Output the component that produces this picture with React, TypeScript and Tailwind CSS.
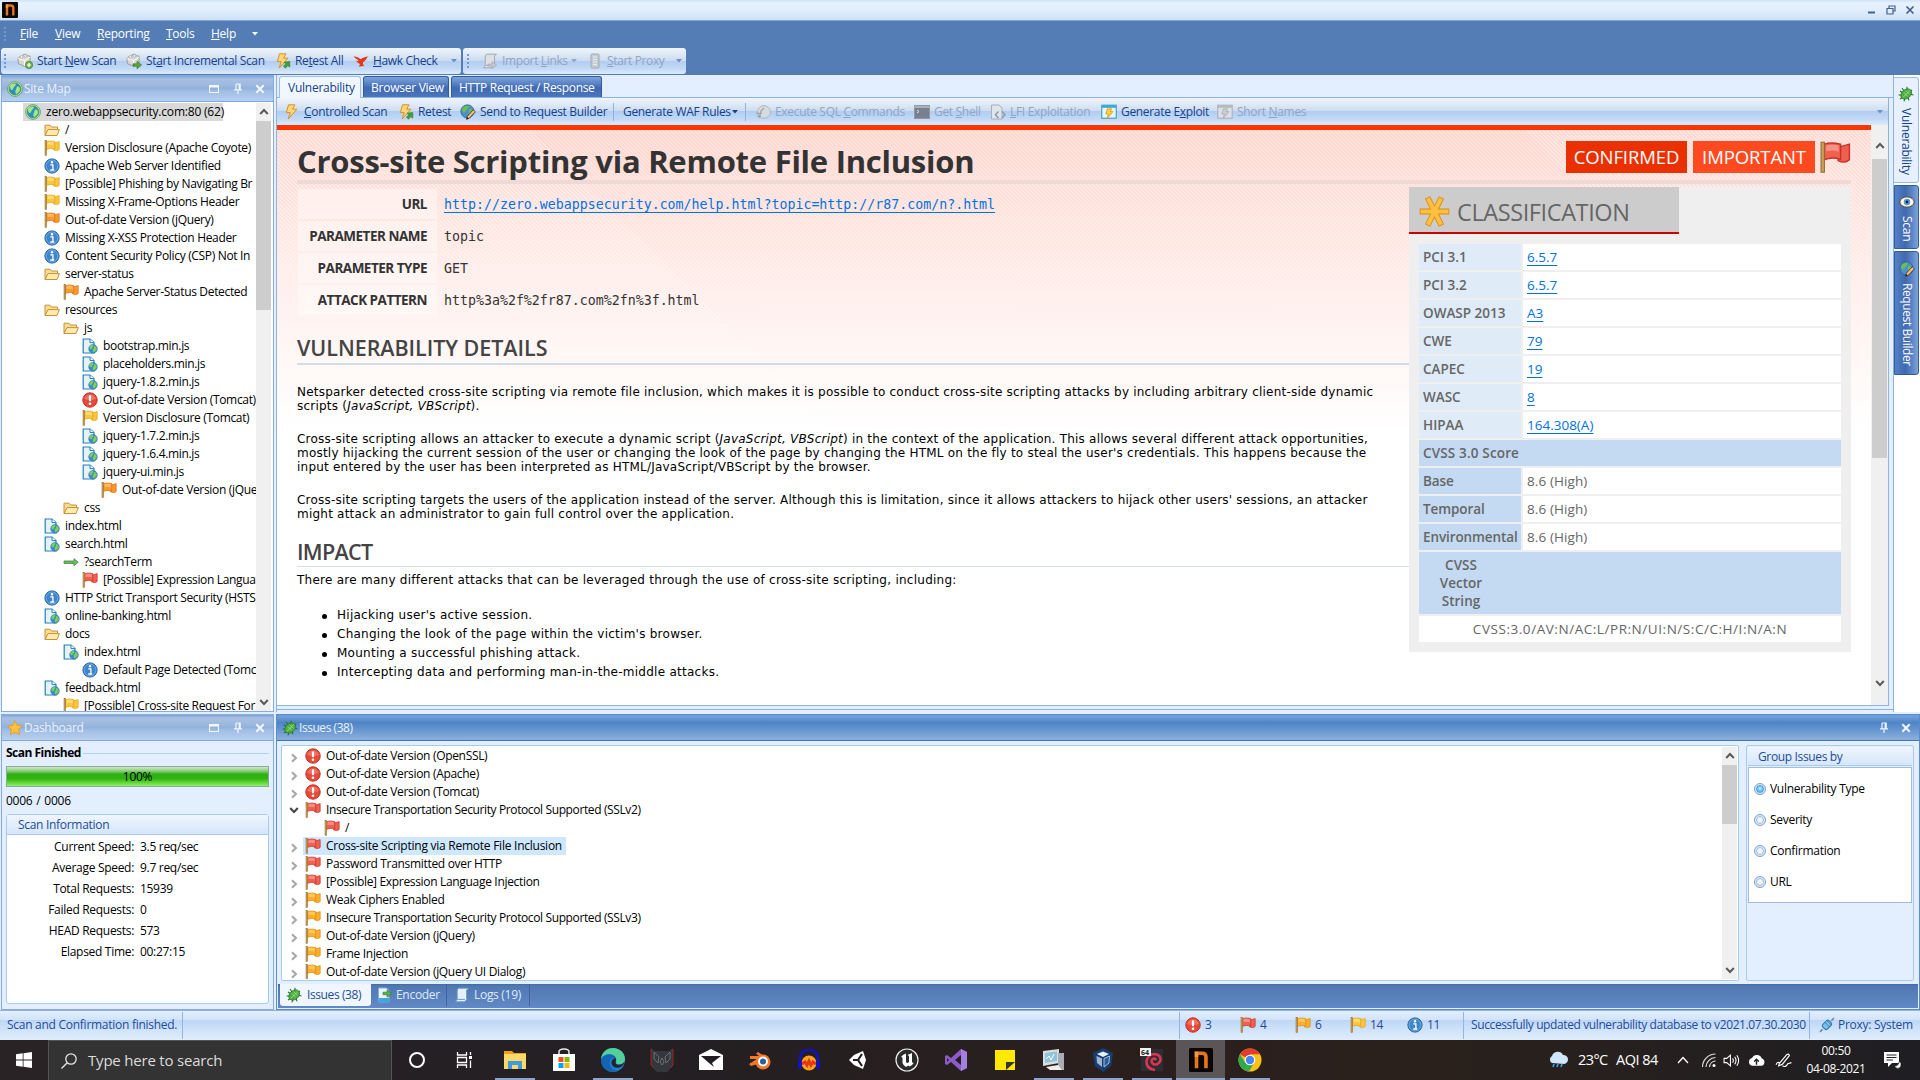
import React from "react";

type P = { className?: string };
type Kids = { children?: React.ReactNode; className?: string };

const UI = "font-['Open_Sans','Noto_Sans',sans-serif]";
const TREB = "font-['Open_Sans','Noto_Sans',sans-serif]";

/* ---------- small icons ---------- */

function Svg({ s = 16, box = "0 0 16 16", children, className = "" }: { s?: number; box?: string } & Kids) {
  return (
    <svg width={s} height={s} viewBox={box} className={"block shrink-0 " + className} fill="none">
      {children}
    </svg>
  );
}

const FLAG: Record<string, [string, string, string]> = {
  red: ["#f0604f", "#c9302c", "#f9a295"],
  orange: ["#fb9a2c", "#e06a10", "#ffc173"],
  amber: ["#fdae2c", "#e08a10", "#ffd36a"],
  yellow: ["#fcc63a", "#e3a11c", "#ffe487"],
};

function Flag({ c, s = 16 }: { c: string; s?: number }) {
  const [m, d, l] = FLAG[c];
  return (
    <Svg s={s}>
      <path d="M9.5 3.2 L15.2 1.6 V9.4 C13.5 11 11.5 10.8 9.5 9.8Z" fill={m} stroke={d} strokeWidth=".7" />
      <path d="M2.5 1.6 C5 .8 8 .9 10.8 1.6 V9.2 C8 8.2 5.5 8.2 2.5 9.4Z" fill={m} stroke={d} strokeWidth=".7" />
      <path d="M3.6 2.2 C6 1.6 8 1.8 9.8 2.3 V5.4 C8 4.6 6 4.6 3.6 5.1Z" fill={l} opacity=".75" />
      <rect x="1" y=".6" width="1.7" height="15" fill="#c9a056" stroke="#8c6a30" strokeWidth=".5" />
    </Svg>
  );
}

function Alert() {
  return (
    <Svg>
      <circle cx="8" cy="8" r="7.2" fill="#e64a3a" stroke="#c03024" />
      <path d="M2.2 7 A6 6 0 0 1 13.8 7 Q8 9 2.2 7Z" fill="#f38a7c" opacity=".6" />
      <rect x="6.9" y="3.2" width="2.2" height="6" rx=".8" fill="#fff" />
      <circle cx="8" cy="11.8" r="1.3" fill="#fff" />
    </Svg>
  );
}

function Info() {
  return (
    <Svg>
      <circle cx="8" cy="8" r="7.1" fill="#3d86cb" stroke="#1f5c9e" />
      <circle cx="8" cy="8" r="6" stroke="#8cbce8" strokeWidth=".7" />
      <circle cx="8" cy="4.3" r="1.2" fill="#fff" />
      <path d="M6.3 6.8H8.9V11.6M6.2 12H10.2" stroke="#fff" strokeWidth="1.3" />
    </Svg>
  );
}

function Folder() {
  return (
    <Svg>
      <path d="M1 13.5V3.2H6L7.5 5H13.5V7.5" fill="#f8dc8f" stroke="#c8923a" />
      <path d="M1 13.5L4 7.6H15.4L13 13.5Z" fill="#fdebb0" stroke="#c8923a" />
    </Svg>
  );
}

function Earth({ cx = 8, cy = 8, r = 6.5 }: { cx?: number; cy?: number; r?: number }) {
  const k = r / 6.5;
  return (
    <g transform={`translate(${cx} ${cy}) scale(${k})`}>
      <circle r="6.5" fill="#3b8ad6" stroke="#2a6a9c" strokeWidth=".6" />
      <path d="M-5.6-2 C-4-5-1-6 0-5.8 C1-3 -1-2 -2 0 C-3 1-5 1-5.6-2Z M1-4 C4-5 6-1 5.5 1 C4 2 3 5 0.5 5.5 C0 3 -1 2 0 0 C2 0 2-2 1-4Z" fill="#7ed348" />
    </g>
  );
}

function Globe({ s = 16 }: { s?: number }) {
  return (
    <Svg s={s}>
      <circle cx="8" cy="8" r="7.4" fill="#d5e8cf" stroke="#5f9f5a" strokeWidth=".9" />
      <circle cx="8" cy="8" r="5.9" fill="#2f8fc4" stroke="#3c9a3c" strokeWidth=".8" />
      <path d="M3 5 C5 2 8 2.2 9 3 C9 5 6.5 5.5 6 8 C5 10 3 9 3 5Z M10 5.5 C12 5 13.4 7 13 9 C12 11 10.5 13 9 13 C8.3 11 8 10 9 8.5Z" fill="#a4e884" />
    </Svg>
  );
}

function PageGlobe() {
  return (
    <Svg>
      <path d="M1.2 1H8L12 4.6V15H1.2Z" fill="#e6f2fb" stroke="#2680b8" strokeWidth="1.2" />
      <path d="M8 1V4.6H12" fill="#fff" stroke="#2680b8" />
      <Earth cx={11} cy={10.8} r={4.4} />
    </Svg>
  );
}

function Arrow() {
  return (
    <Svg>
      <path d="M1 7H11V4.7L15.2 8.2L11 11.7V9.4H1Z" fill="#6dbb62" stroke="#3a8a3a" strokeWidth=".8" />
    </Svg>
  );
}

function Bug({ s = 16 }: { s?: number }) {
  return (
    <Svg s={s}>
      <path d="M4 2L6 5M9 .8L9 4M2 5L5 7M.6 9L4 9M2 13L5 11M6 15.4L7 12M11 14.4L10 11M15.4 9L12 8M14 4L11 6" stroke="#2d6b2a" strokeWidth="1.1" />
      <ellipse cx="8.2" cy="8" rx="6" ry="4.4" transform="rotate(-40 8.2 8)" fill="#4caf3f" stroke="#2d7a2a" strokeWidth=".8" />
      <path d="M4.8 11.4L12 4.4M6 6.5L9.6 10.4M8 4.8L11.6 8.4" stroke="#a6e08c" strokeWidth=".8" />
    </Svg>
  );
}

function Star() {
  return (
    <Svg>
      <path d="M8 .8L10.2 5.4L15.3 6L11.5 9.5L12.6 14.7L8 12.1L3.4 14.7L4.5 9.5L.7 6L5.8 5.4Z" fill="#ffc23a" stroke="#e39a20" strokeWidth=".9" />
    </Svg>
  );
}

function Bolt({ green = false }: { green?: boolean }) {
  return (
    <Svg>
      <path d="M4.5 .8H11L8.6 5.2H13L4.2 15L6.2 8.6H2.4Z" fill="#fdd678" stroke="#d8912a" />
      {green && <path d="M9 9.2L14.8 8.4V14.2L12.8 12.6L10.6 15.2L8.4 13.2L10.8 10.8Z" fill="#3f9e34" stroke="#2a7424" strokeWidth=".5" />}
    </Svg>
  );
}

function Cubes({ plus = false }: { plus?: boolean }) {
  return (
    <Svg>
      <path d="M1 5.5L3 3.2L5.4 3.6L6.2 1.6L9 1.2L10 2.8L13 3V9.5L8 13.5L1.4 10.6Z" fill="#d9d8d4" stroke="#8f8f8c" strokeWidth=".8" />
      <path d="M1.2 5.6L7.6 7.6L13 4.2M7.6 7.6V13" stroke="#fff" />
      <circle cx="4.4" cy="3.9" r="1.4" fill="#f2f1ee" stroke="#999" strokeWidth=".5" />
      <circle cx="8.4" cy="2.8" r="1.4" fill="#f2f1ee" stroke="#999" strokeWidth=".5" />
      {plus ? (
        <>
          <circle cx="12" cy="12" r="3.7" fill="#6fb04f" stroke="#3d7f2b" strokeWidth=".6" />
          <path d="M12 10V14M10 12H14" stroke="#fff" strokeWidth="1.2" />
        </>
      ) : (
        <path d="M7 10.8H11V8.2L15.6 12L11 15.8V13.3H7Z" fill="#57a63d" stroke="#2f7322" strokeWidth=".6" />
      )}
    </Svg>
  );
}

function Hawk() {
  return (
    <Svg>
      <path d="M.6 3.2C4 3.6 6 4.6 7.6 6.2C9.6 4.8 12 3.6 15.4 3.4C13.8 4.4 13.6 5.4 13 6.4C11.8 7.8 10.8 8.6 10 9.2C9.6 11 10.4 12 11.4 13L5.8 13.4L7 11.2C6 10.6 4 9.4 3 7.6C5 8.4 5.6 8 5.4 7.2C3.6 5.8 1.8 5 .6 3.2Z" fill="#e2371f" />
    </Svg>
  );
}

function GlobePencil() {
  return (
    <Svg>
      <circle cx="7.4" cy="7.4" r="6.6" fill="#4b8fcc" stroke="#2b5f8c" strokeWidth=".7" />
      <path d="M2 5C4 2 6.5 1.2 8.6 2C9 4.4 6 5 5.6 7.4C4.6 9.4 2.4 9 2 5Z M9 5C12 4.6 13 6 12.6 8.4L9 12Z" fill="#6cc04a" />
      <path d="M6.6 15.2L7.4 12.2L13.2 5.8L15.4 7.8L9.6 14Z" fill="#efc27c" stroke="#3b2f22" strokeWidth=".8" />
      <path d="M6.4 15.4L7 13L8.8 14.6Z" fill="#222" />
    </Svg>
  );
}

function Scroll({ gray = false }: { gray?: boolean }) {
  return (
    <Svg>
      <path d="M4.5 1.2H14.5L12.6 3.2V12.6L10.8 14.8H1.4L3.2 12.4V3Z" fill={gray ? "#dde1e6" : "#e4f1fc"} stroke={gray ? "#a4a9b0" : "#6c9cc8"} />
      <path d="M3.4 12.4H11" stroke={gray ? "#a4a9b0" : "#6c9cc8"} />
      {gray && <path d="M6 11H10V8.6L14.6 12L10 15.4V13H6Z" fill="#c4c9cf" stroke="#9aa0a8" strokeWidth=".6" />}
    </Svg>
  );
}

function Server() {
  return (
    <Svg>
      <rect x="4" y="1" width="8" height="14" rx="1" fill="#c5cbd3" stroke="#a2aab4" />
      <path d="M6 4H10M6 6.5H10M6 9H10M6 11.5H10" stroke="#e9edf2" />
    </Svg>
  );
}

function Terminal() {
  return (
    <Svg>
      <rect x=".5" y="1.5" width="15" height="13" fill="#77808c" stroke="#8f98a4" />
      <path d="M.5 3H15.5" stroke="#b6bdc7" strokeWidth="1.6" />
      <path d="M3 6L5 7.5L3 9" stroke="#dfe3e8" />
    </Svg>
  );
}

function CodePage() {
  return (
    <Svg>
      <path d="M1.5 1H9L12 4V15H1.5Z" fill="#dfe5ec" stroke="#a7afba" />
      <path d="M8.5 7.6L5.4 10.8L8.5 14M12 7.6L15 10.8L12 14" stroke="#9098a3" strokeWidth="1.5" />
    </Svg>
  );
}

function Exploit({ gray = false }: { gray?: boolean }) {
  return (
    <Svg>
      <rect x=".8" y="1.2" width="14.4" height="13" fill={gray ? "#dde1e6" : "#e9f5fc"} stroke={gray ? "#a8adb5" : "#2893c7"} />
      <rect x=".8" y="1.2" width="14.4" height="2.6" fill={gray ? "#b5bac1" : "#39a8d8"} />
      <path d="M6.4 4.8H10.6L9.2 7.6H12L6.2 14.6L7.4 10H4.8Z" fill={gray ? "#c9cdd2" : "#ffd33c"} stroke={gray ? "#a8adb5" : "#d89b14"} strokeWidth=".8" />
    </Svg>
  );
}

function SqlIcon() {
  return (
    <Svg>
      <circle cx="9" cy="8" r="6.4" fill="#d7dbe0" stroke="#b0b6be" />
      <path d="M4 14L6 7L9 4M1.4 9.4H7M2.4 12H6" stroke="#9ea5ae" strokeWidth="1.3" />
    </Svg>
  );
}

function Eye() {
  return (
    <Svg>
      <ellipse cx="8" cy="8" rx="7.2" ry="5.2" fill="#f7e6cf" stroke="#5b4632" />
      <ellipse cx="8" cy="8" rx="5.8" ry="3.6" fill="#fff" />
      <circle cx="8" cy="8" r="3.3" fill="#4aa3df" />
      <circle cx="8" cy="8" r="1.4" fill="#0d1e33" />
    </Svg>
  );
}

function EncoderIcon() {
  return (
    <Svg>
      <path d="M1.5 1H9.5L12 3.6V15H1.5Z" fill="#e8f3fc" stroke="#7fb0dc" />
      <path d="M1.5 11H12V15H1.5Z" fill="#3fa6e0" />
      <path d="M6 5.2H10V2.8L15 6.5L10 10.2V7.8H6Z" fill="#5aae48" stroke="#2f7a2a" strokeWidth=".6" />
    </Svg>
  );
}

function Plug() {
  return (
    <Svg>
      <path d="M1 15L3.6 12.2M15 1L12.4 3.8" stroke="#6b7f95" strokeWidth="1.4" />
      <rect x="3.6" y="4.6" width="9" height="6.6" rx="2" transform="rotate(-45 8 8)" fill="#7cc0ea" stroke="#2d73a8" />
      <path d="M6 5.4L10.6 10M8 3.8L12.4 8" stroke="#2d73a8" strokeWidth=".8" />
    </Svg>
  );
}

function Down({ className = "" }: P) {
  return (
    <svg width="6" height="4" viewBox="0 0 6 4" className={"block shrink-0 " + className}>
      <path d="M0 0H6L3 3.6Z" fill="currentColor" />
    </svg>
  );
}

function Chev({ d = "up", className = "" }: P & { d?: string }) {
  const rot: Record<string, number> = { up: 0, right: 90, down: 180 };
  return (
    <svg width="10" height="10" viewBox="0 0 10 10" className={"block shrink-0 " + className} fill="none">
      <path d="M1.2 7L5 3L8.8 7" stroke="currentColor" strokeWidth="2" transform={`rotate(${rot[d]} 5 5)`} />
    </svg>
  );
}

function PinIcon() {
  return (
    <svg width="10" height="12" viewBox="0 0 10 12" fill="none" className="block">
      <path d="M3 1H7.2V6.4M3 1V6.4M6.2 1V6.4M1 6.8H9M5 7V11" stroke="#eef4fc" strokeWidth="1.2" />
    </svg>
  );
}

function CloseIcon() {
  return (
    <svg width="10" height="10" viewBox="0 0 10 10" fill="none" className="block">
      <path d="M1.3 1.3L8.7 8.7M8.7 1.3L1.3 8.7" stroke="#f2f6fc" strokeWidth="2" />
    </svg>
  );
}

function MaxIcon() {
  return (
    <svg width="10" height="8" viewBox="0 0 10 8" fill="none" className="block">
      <rect x=".5" y=".5" width="9" height="7" stroke="#f2f6fc" />
      <path d="M0 1.5H10" stroke="#f2f6fc" strokeWidth="2" />
    </svg>
  );
}

function NLogo({ s }: { s: number }) {
  return (
    <Svg s={s}>
      <rect width="16" height="16" rx="1" fill="#0a0806" />
      <path d="M5 13.500V3.500H8.800Q11.300 3.500 11.300 6V13.500" stroke="#e8741c" strokeWidth="2.400" />
      <path d="M3.800 2.400H6.200V6H3.800Z" fill="#f39a3c" />
    </Svg>
  );
}

/* ---------- chrome ---------- */

function Grip() {
  return (
    <div className="flex w-[3px] shrink-0 flex-col gap-[2px]">
      {[0, 1, 2, 3].map((i) => (
        <i key={i} className="block h-[2px] w-[2px] bg-[#6f9ad3]" />
      ))}
    </div>
  );
}

function Item({ icon, className = "", off = false, children }: { icon?: React.ReactNode; off?: boolean } & Kids) {
  return (
    <div className={"flex shrink-0 items-center gap-[4px] whitespace-nowrap " + (off ? "text-[#8fa5c4] " : "text-[#15428b] ") + className}>
      {icon}
      <span>{children}</span>
    </div>
  );
}

const BAR =
  "bg-[linear-gradient(180deg,#eef4fb_0%,#dfe9f6_25%,#cbdbef_49%,#b1cdf1_50%,#c3daf6_80%,#dcebfc_100%)]";

function MenuBar() {
  return (
    <div className="flex h-[26px] items-center pl-[4px] text-[12px] tracking-[-0.25px] text-white">
      <Grip />
      <span className="ml-[13px] w-[35px]"><u>F</u>ile</span>
      <span className="w-[42px]"><u>V</u>iew</span>
      <span className="w-[69px]"><u>R</u>eporting</span>
      <span className="w-[45px]"><u>T</u>ools</span>
      <span className="w-[41px]"><u>H</u>elp</span>
      <Down className="text-white" />
    </div>
  );
}

function MainToolbar() {
  return (
    <div className="mt-px flex h-[27px] gap-[2px] pl-px text-[12px] tracking-[-0.36px]">
      <div className={"flex h-[26px] w-[460px] items-center rounded-[3px] pl-[3px] " + BAR}>
        <Grip />
        <Item className="ml-[10px] w-[109px]" icon={<Cubes plus />}>Start <u>N</u>ew Scan</Item>
        <Item className="w-[149px]" icon={<Cubes />}>St<u>a</u>rt Incremental Scan</Item>
        <Item className="w-[78px]" icon={<Bolt green />}>Re<u>t</u>est All</Item>
        <Item className="w-[98px]" icon={<Hawk />}><u>H</u>awk Check</Item>
        <Down className="text-[#6d8fc4]" />
      </div>
      <div className={"flex h-[26px] w-[223px] items-center rounded-[3px] pl-[4px] " + BAR}>
        <Grip />
        <Item off className="ml-[12px] w-[89px]" icon={<Scroll gray />}>Import <u>L</u>inks</Item>
        <Down className="text-[#8fa5c4]" />
        <Item off className="ml-[10px] w-[89px]" icon={<Server />}><u>S</u>tart Proxy</Item>
        <Down className="text-[#6d8fc4]" />
      </div>
    </div>
  );
}

function PanelHeader({ icon, title, active = false, children }: { icon: React.ReactNode; title: string; active?: boolean; children?: React.ReactNode }) {
  return (
    <div
      className={
        "flex h-[26px] shrink-0 items-center gap-[1px] border-b pl-[5px] text-[12px] " +
        (active
          ? "tracking-[-0.45px] border-[#3f74b8] bg-[linear-gradient(180deg,#6f9dd8_0%,#6f9dd8_8%,#4f84c6_30%,#5e90cd_50%,#8db0de_100%)] text-[#e9f2fd]"
          : "tracking-[-0.25px] border-[#7fa8dc] bg-[linear-gradient(180deg,#7da3d8_0%,#a8c1e2_12%,#9db9df_35%,#93b1db_50%,#a0bde4_60%,#b8d0ef_100%)] text-[#eaf2fc]")
      }
    >
      {icon}
      <span className="grow">{title}</span>
      {children}
    </div>
  );
}

function Controls({ max = false }: { max?: boolean }) {
  return (
    <div className="flex items-center pr-[8px]">
      {max && <span className="w-[24px]"><MaxIcon /></span>}
      <span className="w-[22px]"><PinIcon /></span>
      <CloseIcon />
    </div>
  );
}

/* ---------- site map ---------- */

const ICONS: Record<string, React.ReactNode> = {
  folder: <Folder />,
  page: <PageGlobe />,
  info: <Info />,
  alert: <Alert />,
  arrow: <Arrow />,
  red: <Flag c="red" />,
  orange: <Flag c="orange" />,
  amber: <Flag c="amber" />,
  yellow: <Flag c="yellow" />,
};

const INDENT = ["pl-[22px]", "pl-[42px]", "pl-[61px]", "pl-[80px]", "pl-[99px]"];

const TREE: [number, string, string][] = [
  [1, "folder", "/"],
  [1, "yellow", "Version Disclosure (Apache Coyote)"],
  [1, "info", "Apache Web Server Identified"],
  [1, "yellow", "[Possible] Phishing by Navigating Br"],
  [1, "yellow", "Missing X-Frame-Options Header"],
  [1, "orange", "Out-of-date Version (jQuery)"],
  [1, "info", "Missing X-XSS Protection Header"],
  [1, "info", "Content Security Policy (CSP) Not In"],
  [1, "folder", "server-status"],
  [2, "orange", "Apache Server-Status Detected"],
  [1, "folder", "resources"],
  [2, "folder", "js"],
  [3, "page", "bootstrap.min.js"],
  [3, "page", "placeholders.min.js"],
  [3, "page", "jquery-1.8.2.min.js"],
  [3, "alert", "Out-of-date Version (Tomcat)"],
  [3, "yellow", "Version Disclosure (Tomcat)"],
  [3, "page", "jquery-1.7.2.min.js"],
  [3, "page", "jquery-1.6.4.min.js"],
  [3, "page", "jquery-ui.min.js"],
  [4, "orange", "Out-of-date Version (jQue"],
  [2, "folder", "css"],
  [1, "page", "index.html"],
  [1, "page", "search.html"],
  [2, "arrow", "?searchTerm"],
  [3, "red", "[Possible] Expression Langua"],
  [1, "info", "HTTP Strict Transport Security (HSTS)"],
  [1, "page", "online-banking.html"],
  [1, "folder", "docs"],
  [2, "page", "index.html"],
  [3, "info", "Default Page Detected (Tomc"],
  [1, "page", "feedback.html"],
  [2, "yellow", "[Possible] Cross-site Request For"],
];

function SiteMap() {
  return (
    <section className="flex h-[637px] flex-col overflow-hidden border border-[#86abdf] bg-white">
      <PanelHeader icon={<Globe />} title="Site Map"><Controls max /></PanelHeader>
      <div className="flex min-h-0 grow overflow-hidden pt-px">
        <div className="w-[254px] shrink-0 overflow-hidden text-[12px] tracking-[-0.33px] text-black">
          <div className="flex h-[18px] pl-[21px]">
            <div className="flex w-[200px] items-center gap-[5px] bg-[#d9d9d9] pl-[2px]">
              <Globe />
              <span className="tracking-[-0.2px] whitespace-nowrap">zero.webappsecurity.com:80 (62)</span>
            </div>
          </div>
          {TREE.map(([lvl, ic, t], i) => (
            <div key={i} className={"flex h-[18px] items-center gap-[5px] whitespace-nowrap " + INDENT[lvl]}>
              {ICONS[ic]}
              <span>{t}</span>
            </div>
          ))}
        </div>
        <div className="flex w-[15px] shrink-0 flex-col items-center bg-[#f0f0f0]">
          <Chev className="my-[4px] text-[#5a5a5a]" />
          <div className="h-[189px] w-full bg-[#cdcdcd]" />
          <Chev d="down" className="mt-auto mb-[4px] text-[#5a5a5a]" />
        </div>
      </div>
    </section>
  );
}

/* ---------- dashboard ---------- */

const STATS = [
  ["Current Speed:", "3.5 req/sec"],
  ["Average Speed:", "9.7 req/sec"],
  ["Total Requests:", "15939"],
  ["Failed Requests:", "0"],
  ["HEAD Requests:", "573"],
  ["Elapsed Time:", "00:27:15"],
];

function Dashboard() {
  return (
    <section className="mt-[2px] flex h-[296px] flex-col border border-[#86abdf] bg-[#e3efff] text-[12px] tracking-[-0.3px] text-black">
      <PanelHeader icon={<Star />} title="Dashboard"><Controls max /></PanelHeader>
      <div className="px-[4px]">
        <div className="mt-[3px] flex h-[18px] items-center gap-[2px]">
          <b className="tracking-[-0.5px]">Scan Finished</b>
          <div className="mt-px h-px grow bg-[#b3d1f3]" />
        </div>
        <div className="mt-[4px] flex h-[21px] items-center justify-center border border-[#85ab9f] bg-[linear-gradient(180deg,#cfe8c8_0%,#8fd07c_20%,#2fae19_38%,#30b40f_60%,#66da3c_85%,#93f06a_100%)]">
          100%
        </div>
        <div className="mt-[5px] h-[18px] leading-[18px] tracking-[-0.25px] [word-spacing:1px]">0006 / 0006</div>
        <div className="mt-[4px] h-[190px] rounded-[3px] border border-[#a9cbf0] bg-white">
          <div className="h-[20px] border-b border-[#a9cbf0] bg-[linear-gradient(180deg,#eff6fe,#d5e6fa)] pl-[11px] leading-[20px] tracking-[-0.3px] text-[#1e4c98]">
            Scan Information
          </div>
          <div className="pt-px">
            {STATS.map(([a, b]) => (
              <div key={a} className="flex h-[21px] items-center gap-[6px]">
                <span className="w-[127px] text-right">{a}</span>
                <span>{b}</span>
              </div>
            ))}
          </div>
        </div>
      </div>
    </section>
  );
}

/* ---------- report ---------- */

function ReportTabs() {
  const blue = "flex h-[21px] items-center rounded-t-[3px] border border-b-0 border-[#34599c] bg-[linear-gradient(180deg,#7fa3da_0%,#5c86c8_30%,#4069b0_55%,#4a76bc_100%)] text-white";
  return (
    <div className="flex h-[23px] shrink-0 items-end gap-[2px] border-b border-[#8db3e3] bg-[#e3efff] pl-[2px] text-[12px] tracking-[-0.25px]">
      <div className="-mb-px flex h-[22px] w-[82px] items-center rounded-t-[3px] border border-b-0 border-[#9dbde9] bg-[#f1f7fe] pl-[8px] text-[#15428b]">Vulnerability</div>
      <div className={blue + " w-[86px] pt-px pl-[7px]"}>Browser View</div>
      <div className={blue + " w-[151px] pt-px pl-[7px] tracking-[-0.32px]"}>HTTP Request / Response</div>
    </div>
  );
}

function ReportToolbar() {
  const sep = "mr-[9px] block h-[18px] w-px bg-[#8fb2e2]";
  return (
    <div className={"flex h-[27px] shrink-0 items-center pl-[7px] text-[12px] tracking-[-0.32px] " + BAR}>
      <Item className="w-[114px]" icon={<Bolt />}><u>C</u>ontrolled Scan</Item>
      <Item className="w-[62px]" icon={<Bolt green />}>Retest</Item>
      <Item className="w-[153px]" icon={<GlobePencil />}>Send to Request Builder</Item>
      <i className={sep} />
      <Item className="w-[109px]">Generate WAF Rules</Item>
      <Down className="mr-[7px] text-[#15428b]" />
      <i className={sep} />
      <Item off className="w-[159px]" icon={<SqlIcon />}>Execute SQL <u>C</u>ommands</Item>
      <Item off className="w-[76px]" icon={<Terminal />}>Get <u>S</u>hell</Item>
      <Item off className="w-[111px]" icon={<CodePage />}><u>L</u>FI Exploitation</Item>
      <Item className="w-[116px]" icon={<Exploit />}>Generate E<u>x</u>ploit</Item>
      <Item off className="w-[90px]" icon={<Exploit gray />}>Short <u>N</u>ames</Item>
      <Down className="mr-[5px] ml-auto text-[#6d8fc4]" />
    </div>
  );
}

const PARAMS = [
  ["URL", "http://zero.webappsecurity.com/help.html?topic=http://r87.com/n?.html"],
  ["PARAMETER NAME", "topic"],
  ["PARAMETER TYPE", "GET"],
  ["ATTACK PATTERN", "http%3a%2f%2fr87.com%2fn%3f.html"],
];

const CLASSES = [
  ["PCI 3.1", "6.5.7"],
  ["PCI 3.2", "6.5.7"],
  ["OWASP 2013", "A3"],
  ["CWE", "79"],
  ["CAPEC", "19"],
  ["WASC", "8"],
  ["HIPAA", "164.308(A)"],
];

function Classification() {
  return (
    <aside className={"mt-[3px] h-[465px] w-[442px] shrink-0 bg-[#efefef] text-[#666] " + TREB}>
      <div className="flex h-[47px] w-[270px] items-center gap-[7px] border-b-2 border-[#cc0000] bg-[#cccccc] pl-[10px]">
        <Svg s={31} box="0 0 30 30" className="mt-[4px]">
          <g stroke="#d98a12" strokeWidth="5.6" strokeLinecap="square">
            <path d="M3.500 15H26.500M9.500 4L20.500 26M20.500 4L9.500 26" />
          </g>
          <g stroke="#ffbf3f" strokeWidth="4" strokeLinecap="square">
            <path d="M3.500 15H26.500M9.500 4L20.500 26M20.500 4L9.500 26" />
          </g>
        </Svg>
        <span className="mt-[7px] text-[23.5px] tracking-[-0.4px]">CLASSIFICATION</span>
      </div>
      <div className="flex flex-col gap-[2px] px-[10px] pt-[10px] text-[13.5px]">
        {CLASSES.map(([a, b]) => (
          <div key={a} className="flex h-[26px] gap-[2px] leading-[26px]">
            <b className="w-[102px] bg-[#dfebf7] pl-[4px] font-semibold">{a}</b>
            <span className="grow bg-white pl-[4px] text-[#0072df]"><u className="underline-offset-[3px]">{b}</u></span>
          </div>
        ))}
        <b className="block h-[26px] bg-[#c3daf2] pl-[4px] leading-[26px] font-semibold tracking-[0.15px]">CVSS 3.0 Score</b>
        {["Base", "Temporal", "Environmental"].map((a) => (
          <div key={a} className="flex h-[26px] gap-[2px] leading-[26px]">
            <b className="w-[102px] bg-[#c3daf2] pl-[4px] font-semibold tracking-[-0.1px]">{a}</b>
            <span className="grow bg-white pl-[4px] tracking-[0.1px]">8.6 (High)</span>
          </div>
        ))}
        <div className="h-[62px] bg-[#c3daf2] pt-[4px]">
          <b className="block w-[84px] text-center leading-[18px] font-semibold">CVSS<br />Vector<br />String</b>
        </div>
        <div className="h-[26px] bg-white text-center leading-[26px] tracking-[0.55px]">CVSS:3.0/AV:N/AC:L/PR:N/UI:N/S:C/C:H/I:N/A:N</div>
      </div>
    </aside>
  );
}

function Report() {
  const h2 = "flex items-end text-[21.5px] font-semibold leading-[26px] text-[#444] " + TREB;
  return (
    <div className="flex min-h-0 grow bg-white">
      <div className="min-w-0 grow overflow-hidden border-t-[5px] border-[#ff3500] bg-[linear-gradient(180deg,rgba(255,255,255,0)_0px,rgba(255,255,255,0.25)_70px,rgba(255,255,255,0.65)_190px,#fff_300px),repeating-linear-gradient(45deg,#ffd8d0_0px,#ffd8d0_1.8px,#ffe6e1_1.8px,#ffe6e1_2.83px)]">
        <div className="mr-[20px] ml-[20px]">
          <div className="flex h-[54px] items-center border-b-4 border-[#eddad6]">
            <h1 className={"mt-[11px] grow text-[31px] leading-[40px] font-bold text-[#333] " + TREB}>
              <span className="tracking-[-0.25px]">Cross-site Scripting via Remote File Inclusion</span>
            </h1>
            <div className={"mt-[4px] flex text-[18.5px] leading-[31px] tracking-[-0.1px] text-white " + TREB}>
              <span className="mr-[6px] w-[121px] bg-[#eb3000] text-center">CONFIRMED</span>
              <span className="mr-[4px] w-[122px] bg-[#ff491f] text-center">IMPORTANT</span>
              <Flag c="red" s={32} />
            </div>
          </div>
          <div className="flex">
            <div className="min-w-0 grow">
              <div className="flex flex-col gap-[2px] pt-[5px] pl-px">
                {PARAMS.map(([k, v], i) => (
                  <div key={k} className="flex h-[30px] items-center">
                    <b className={"h-[30px] w-[139px] bg-white/40 pr-[10px] text-right text-[13.5px] leading-[31px] font-bold text-[#333] " + TREB}>
                      <span className="tracking-[-0.5px]">{k}</span>
                    </b>
                    <span className={"mt-[2px] ml-[7px] font-['DejaVu_Sans_Mono',monospace] text-[13.28px] " + (i === 0 ? "text-[#0072df] underline underline-offset-[3px]" : "text-[#333]")}>{v}</span>
                  </div>
                ))}
              </div>
              <div className={"mt-[18px] h-[32px] border-b-2 border-[#d3dde6] " + h2}><span className="pb-[2px] tracking-[-0.05px]">VULNERABILITY DETAILS</span></div>
              <div className="pt-[20px] font-['DejaVu_Sans',sans-serif] text-[12px] leading-[14px] tracking-[0.22px] text-black">
                <p className="whitespace-nowrap">
                  Netsparker detected cross-site scripting via remote file inclusion, which makes it is possible to conduct cross-site scripting attacks by including arbitrary client-side dynamic<br />
                  scripts (<i>JavaScript, VBScript</i>).
                </p>
                <p className="mt-[19px] whitespace-nowrap">
                  Cross-site scripting allows an attacker to execute a dynamic script (<i>JavaScript, VBScript</i>) in the context of the application. This allows several different attack opportunities,<br />
                  mostly hijacking the current session of the user or changing the look of the page by changing the HTML on the fly to steal the user's credentials. This happens because the<br />
                  input entered by the user has been interpreted as HTML/JavaScript/VBScript by the browser.
                </p>
                <p className="mt-[19px] whitespace-nowrap">
                  Cross-site scripting targets the users of the application instead of the server. Although this is limitation, since it allows attackers to hijack other users' sessions, an attacker<br />
                  might attack an administrator to gain full control over the application.
                </p>
              </div>
              <div className={"mt-[13px] h-[33px] border-b border-[#d3dde6] " + h2}><span className="pb-[1px] tracking-[-0.7px]">IMPACT</span></div>
              <div className="pt-[6px] font-['DejaVu_Sans',sans-serif] text-[12px] leading-[14px] tracking-[0.26px] text-black">
                <p className="whitespace-nowrap">There are many different attacks that can be leveraged through the use of cross-site scripting, including:</p>
                <ul className="mt-[19px] leading-[19px]">
                  {["Hijacking user's active session.", "Changing the look of the page within the victim's browser.", "Mounting a successful phishing attack.", "Intercepting data and performing man-in-the-middle attacks."].map((t) => (
                    <li key={t} className="flex items-center pl-[25px]"><i className="mt-px mr-[10px] block h-[5px] w-[5px] rounded-full bg-black" />{t}</li>
                  ))}
                </ul>
              </div>
            </div>
            <Classification />
          </div>
        </div>
      </div>
      <div className="flex w-[17px] shrink-0 flex-col items-center bg-[#f0f0f0]">
        <Chev className="mt-[16px] mb-[8px] text-[#5a5a5a]" />
        <div className="h-[299px] w-[15px] bg-[#cdcdcd]" />
        <Chev d="down" className="mt-auto mb-[17px] text-[#5a5a5a]" />
      </div>
    </div>
  );
}

function SideTabs() {
  const blue = "flex w-[25px] flex-col items-center rounded-r-[3px] border border-[#34599c] bg-[linear-gradient(270deg,#7fa3da_0%,#5c86c8_25%,#4069b0_55%,#5581c5_100%)] text-white";
  const v = "[writing-mode:vertical-rl] leading-[18px] whitespace-nowrap";
  return (
    <div className="flex w-[26px] shrink-0 flex-col gap-[2px] bg-white pt-[2px] text-[12px] tracking-[-0.25px]">
      <div className="flex h-[106px] w-[25px] flex-col items-center gap-[6px] rounded-r-[3px] border border-l-0 border-[#9dbde9] bg-[#e6f0fe] pt-[8px] text-[#15428b]">
        <Bug /><span className={v}>Vulnerability</span>
      </div>
      <div className={blue + " h-[64px] gap-[6px] pt-[8px]"}><Eye /><span className={v}>Scan</span></div>
      <div className={blue + " h-[124px] gap-[6px] pt-[9px] tracking-[-0.4px]"}><GlobePencil /><span className={v}>Request Builder</span></div>
    </div>
  );
}

/* ---------- issues ---------- */

const ISSUES: [string, string][] = [
  ["alert", "Out-of-date Version (OpenSSL)"],
  ["alert", "Out-of-date Version (Apache)"],
  ["alert", "Out-of-date Version (Tomcat)"],
  ["red", "Insecure Transportation Security Protocol Supported (SSLv2)"],
  ["red", "/"],
  ["red", "Cross-site Scripting via Remote File Inclusion"],
  ["red", "Password Transmitted over HTTP"],
  ["red", "[Possible] Expression Language Injection"],
  ["amber", "Weak Ciphers Enabled"],
  ["amber", "Insecure Transportation Security Protocol Supported (SSLv3)"],
  ["amber", "Out-of-date Version (jQuery)"],
  ["amber", "Frame Injection"],
  ["amber", "Out-of-date Version (jQuery UI Dialog)"],
];

function Issues() {
  return (
    <section className="mt-[2px] flex h-[296px] flex-col border border-[#5c8ccb] bg-[#e3efff] text-[12px]">
      <PanelHeader active icon={<Bug />} title="Issues (38)"><Controls /></PanelHeader>
      <div className="flex h-[240px] gap-[7px] pt-[4px] pl-[4px]">
        <div className="flex h-[236px] w-[1458px] rounded-[2px] border border-[#a9cbf0] bg-white p-px">
          <div className="grow overflow-hidden text-black">
            {ISSUES.map(([ic, t], i) => {
              const child = i === 4;
              const sel = i === 5;
              const long = t.length > 50;
              return (
                <div key={i} className={"flex h-[18px] items-center " + (child ? "pl-[39px]" : "pl-[6px]")}>
                  {!child && (i === 3 ? <Chev d="down" className="mr-[4px] text-[#444]" /> : <Chev d="right" className="mt-[3px] mr-[4px] text-[#a6a6a6]" />)}
                  <div className={"flex h-[18px] items-center gap-[5px] px-[2px] whitespace-nowrap " + (sel ? "w-[263px] bg-[#cde8ff] tracking-[-0.25px]" : long ? "tracking-[-0.38px]" : "tracking-[-0.32px]")}>
                    {ICONS[ic]}
                    <span>{t}</span>
                  </div>
                </div>
              );
            })}
          </div>
          <div className="flex w-[15px] flex-col items-center bg-[#f0f0f0]">
            <Chev className="my-[4px] text-[#5a5a5a]" />
            <div className="h-[59px] w-full bg-[#cdcdcd]" />
            <Chev d="down" className="mt-auto mb-[4px] text-[#5a5a5a]" />
          </div>
        </div>
        <div className="h-[236px] w-[168px] rounded-[2px] border border-[#a9cbf0] p-px">
          <div className="h-[19px] border-b border-[#a9cbf0] bg-[linear-gradient(180deg,#eff6fe,#d5e6fa)] pl-[10px] leading-[19px] tracking-[-0.35px] text-[#1e4c98]">Group Issues by</div>
          <div className="mt-px flex h-[136px] flex-col border border-[#a3bce2] bg-white pt-[5px] pl-[5px]">
            {["Vulnerability Type", "Severity", "Confirmation", "URL"].map((t, i) => (
              <div key={t} className="flex h-[31px] items-center gap-[4px] tracking-[-0.28px] text-black">
                <span className={"flex h-[12px] w-[12px] items-center justify-center rounded-full border border-[#7c9fd2] " + (i === 0 ? "bg-[#d5ecfb]" : "bg-[#e4edf8]")}>
                  <i className={"block h-[8px] w-[8px] rounded-full " + (i === 0 ? "border border-[#4a9ce0] bg-[radial-gradient(circle_at_50%_40%,#c5ecff_0%,#58b4f0_70%)]" : "border border-[#9db9df] bg-[#f1f5fb]")} />
                </span>
                {t}
              </div>
            ))}
          </div>
        </div>
      </div>
      <div className="mx-px mt-[3px] flex h-[24px] shrink-0 items-start bg-[linear-gradient(180deg,#446aa3_0px,#5078b2_2px,#6189c5_100%)] pl-[2px] tracking-[-0.3px] text-[#dfeafa]">
        <div className="flex h-[22px] w-[91px] items-center gap-[5px] rounded-b-[3px] bg-[#f0f6fe] pl-[6px] tracking-[-0.4px] text-[#1e4c98]"><Bug /><span>Issues (38)</span></div>
        <div className="flex h-[22px] w-[76px] items-center gap-[3px] border-r border-[#3f659f] pl-[6px]"><EncoderIcon /><span>Encoder</span></div>
        <div className="flex h-[22px] w-[83px] items-center gap-[4px] border-r border-[#3f659f] pl-[7px]"><Scroll /><span>Logs (19)</span></div>
      </div>
    </section>
  );
}

function StatusBar() {
  const sep = "block h-[27px] w-px bg-[#93b5e2]";
  return (
    <div className="flex h-[30px] shrink-0 items-center border-t border-[#8db3e3] bg-[linear-gradient(180deg,#e3effd_0%,#d2e4fa_30%,#bdd6f6_31%,#cfe3fa_65%,#e0edfc_100%)] pb-px pl-[7px] text-[12px] tracking-[-0.27px] whitespace-nowrap text-[#1e4c98]">
      <span className="w-[175px]">Scan and Confirmation finished.</span>
      <i className={sep} />
      <span className="w-[996px]" />
      <i className={sep} />
      <span className="ml-[5px] flex w-[55px] items-center gap-[4px]"><Alert />3</span>
      <span className="flex w-[55px] items-center gap-[4px]"><Flag c="red" />4</span>
      <span className="flex w-[55px] items-center gap-[4px]"><Flag c="amber" />6</span>
      <span className="flex w-[57px] items-center gap-[4px]"><Flag c="yellow" />14</span>
      <span className="flex w-[56px] items-center gap-[4px]"><Info />11</span>
      <i className={sep} />
      <span className="w-[345px] pl-[7px] tracking-[-0.39px]">Successfully updated vulnerability database to v2021.07.30.2030</span>
      <i className={sep} />
      <span className="flex items-center gap-[3px] pl-[9px]"><Plug />Proxy: System</span>
    </div>
  );
}

/* ---------- taskbar ---------- */

const APPS: { el: React.ReactNode; line?: boolean; on?: boolean }[] = [
  { el: <Svg s={20} box="0 0 20 20"><circle cx="10" cy="10" r="7" stroke="#fff" strokeWidth="2" /></Svg> },
  { el: <Svg s={18} box="0 0 18 18" className="mr-[3px]"><path d="M2.500 1V4H11.500V1M2.500 17V14H11.500V17M2.500 6.500H11.500V11.500H2.500ZM15.500 1V4M15.500 9.500V17" stroke="#fff" strokeWidth="1.300" /><rect x="14" y="5" width="3" height="3" fill="#fff" /></Svg> },
  {
    line: true,
    el: <Svg s={22} box="0 0 22 22"><path d="M0 2H8L10 4H22V20H0Z" fill="#e8a317" /><path d="M0 5H22V20H0Z" fill="#ffd968" /><path d="M4 20V12H18V20H14V16H8V20Z" fill="#3d9be0" /></Svg>,
  },
  {
    el: <Svg s={24} box="0 0 24 24"><path d="M7 6V4Q7 1 12 1T17 4V6" stroke="#e8e8e8" strokeWidth="1.500" /><path d="M1 6H23V23H1Z" fill="#fff" /><path d="M6.500 9H11.500V14H6.500Z" fill="#f25022" /><path d="M12.500 9H17.500V14H12.500Z" fill="#7fba00" /><path d="M6.500 15H11.500V20H6.500Z" fill="#00a4ef" /><path d="M12.500 15H17.500V20H12.500Z" fill="#ffb900" /></Svg>,
  },
  {
    line: true,
    el: <Svg s={26} box="0 0 26 26"><circle cx="13" cy="13" r="12" fill="#1a80d0" /><path d="M1 12C2 4 8 1 13 1C20 1 25 6 25 12C25 16 21 18 17 17C15 16 17 14 16 11C13 6 5 6 1 12Z" fill="#52cf9a" /><path d="M1 12C5 6 13 6 16 11C10 10 8 15 11 20C13 24 18 24 20 22C13 28 1 24 1 12Z" fill="#1464b4" /><path d="M15.500 11C17 14 14 16 17 17.500C20 18.500 23 17 24.500 15C23 20 18 22 14 20C10 17 11 12 15.500 11Z" fill="#26222a" /></Svg>,
  },
  {
    el: <Svg s={24} box="0 0 24 24"><path d="M1 0L5 3H19L23 0V18L17 24H7L1 18Z" fill="#34373b" /><path d="M4 4L9 9L8 15L4 11ZM20 4L15 9L16 15L20 11ZM12 10L14 14L12 17L10 14Z" stroke="#6d7176" /><path d="M1 1V17L4 20M23 1V17L20 20" stroke="#a52026" /></Svg>,
  },
  { el: <Svg s={24} box="0 0 24 24"><path d="M0 7L12 1L24 7V22H0Z" fill="#fff" /><path d="M2 8H22L13 15L15 19L10 15Z" fill="#221d20" /></Svg> },
  {
    el: <Svg s={24} box="0 0 24 24"><path d="M2 8H11L8 5.500L10 4L22 12L3 18L1 16L9 11H2Z" fill="#f5792a" /><circle cx="15" cy="14" r="7.500" fill="#f5792a" /><circle cx="15" cy="13.500" r="5" fill="#fff" /><circle cx="15" cy="13.500" r="3" fill="#2561a0" /></Svg>,
  },
  {
    el: <Svg s={24} box="0 0 24 24"><circle cx="12" cy="15" r="7.500" fill="#f9a51a" /><path d="M5 16L8 14L10 17L12 13L14 17L16 14L19 16" stroke="#e6331a" strokeWidth="3" /><path d="M3 17V11Q3 2 12 2T21 11V17" stroke="#1013c6" strokeWidth="2.500" /><rect x="1" y="13" width="4" height="8" rx="2" fill="#1013c6" /><rect x="19" y="13" width="4" height="8" rx="2" fill="#1013c6" /></Svg>,
  },
  { el: <Svg s={20} box="0 0 20 20"><path d="M1 10L6 5L15 1L18 10L15 19L6 15Z" fill="#fff" /><path d="M5 10H10L14 4M10 10L14 16" stroke="#231e20" strokeWidth="2.200" /></Svg> },
  {
    el: <Svg s={24} box="0 0 24 24"><circle cx="12" cy="12" r="11" fill="#2b2b2b" stroke="#eee" strokeWidth="1.200" /><path d="M6 9Q8 6 11 5.500V14Q12 16 14 14V8L12.500 7L17 5V14Q18 15.500 19 14.500Q17 18 14.500 18.500L13.500 17.500L11 19Q8 17 7.500 15V9.500Z" fill="#fff" /></Svg>,
  },
  { el: <Svg s={24} box="0 0 24 24"><path d="M17 1L23 4V20L17 23L7 14L3 17L1 16V8L3 7L7 10Z" fill="#8d5cc9" /><path d="M17 7V17L11 12Z" fill="#241e22" /><path d="M17 1L23 4V20L17 23Z" fill="#a57fe0" /><path d="M3 10V14L5 12Z" fill="#241e22" /></Svg> },
  { el: <Svg s={20} box="0 0 20 20"><path d="M0 0H20V20H10V12H20V20H0Z" fill="#ffe900" /><path d="M11 12H20L11 20Z" fill="#333" /></Svg> },
  {
    line: true,
    el: <Svg s={24} box="0 0 24 24"><path d="M1 3L17 1V15L1 18Z" fill="#d9dee3" /><path d="M3 5L15 3.500V13L3 15Z" fill="#8ec3d8" /><path d="M16 5H22V22H16Z" fill="#a9aeb4" /><path d="M4 11L7 8L9 12L12 6" stroke="#fff" /><path d="M4 19L16 17L20 22H8Z" fill="#eee" /></Svg>,
  },
  {
    line: true,
    el: <Svg s={24} box="0 0 24 24"><path d="M12 0L22 5L20 18L12 24L4 18L2 5Z" fill="#163e73" /><path d="M6 6L12 3.500L18 6L12 9Z" fill="#e8eef5" /><path d="M5.500 8L11 10.500V19L6 15Z" fill="#9db7d3" /><path d="M18.500 8L13 10.500V19L18 15Z" fill="#2d5d94" stroke="#c9d8e8" strokeWidth=".8" /></Svg>,
  },
  {
    line: true,
    el: <Svg s={24} box="0 0 24 24"><rect x="1" y="1" width="22" height="22" rx="1" fill="#2c2e35" /><path d="M15 22Q6 21 6.500 13Q8 6 15 6Q21 7 20.500 12Q19 17 14 16.500Q10 14 12.500 11Q15 9.500 16 12" stroke="#e0344f" strokeWidth="2.600" /><rect width="11" height="8" fill="#f4f4f4" /><text x="1" y="7" fontSize="7" fontWeight="bold" fill="#222">64</text></Svg>,
  },
  { line: true, on: true, el: <NLogo s={24} /> },
  {
    line: true,
    el: <Svg s={24} box="0 0 24 24"><circle cx="12" cy="12" r="11.500" fill="#fbc116" /><path d="M12 12L2 6.300A11.500 11.500 0 0 1 22 6.300H12Z" fill="#e33b2e" /><path d="M2 6.300L7.500 15L11 23.400A11.500 11.500 0 0 1 2 6.300Z" fill="#2da94f" /><path d="M7 14L11 23.500L16.500 14Z" fill="#2da94f" /><circle cx="12" cy="12" r="5.300" fill="#fff" /><circle cx="12" cy="12" r="4.200" fill="#4285f4" /></Svg>,
  },
];

function Taskbar() {
  return (
    <div className={"flex h-[40px] w-full shrink-0 items-center bg-[linear-gradient(90deg,#2a2326_0%,#231f22_35%,#2b1f1d_60%,#2a211c_75%,#1f1e22_100%)] text-white " + UI}>
      <div className="flex w-[48px] justify-center">
        <Svg s={16}><path d="M0 2.300L6.700 1.300V7.600H0ZM7.500 1.200L16 0V7.600H7.500ZM0 8.400H6.700V14.700L0 13.700ZM7.500 8.400H16V16L7.500 14.800Z" fill="#fff" /></Svg>
      </div>
      <div className="flex h-[40px] w-[344px] items-center gap-[10px] border border-b-0 border-[#555] bg-[#333] pl-[11px]">
        <Svg s={18} box="0 0 18 18"><circle cx="11" cy="7" r="5.200" stroke="#e6e6e6" strokeWidth="1.300" /><path d="M7.200 10.800L1.500 16.500" stroke="#e6e6e6" strokeWidth="1.300" /></Svg>
        <span className="text-[15px] tracking-[-0.2px] text-[#dcdcdc]">Type here to search</span>
      </div>
      <div className="flex">
        {APPS.map((a, i) => (
          <div key={i} className={"flex h-[40px] w-[49px] flex-col items-center justify-between " + (a.on ? "bg-[#5b5557]" : "")}>
            <span className="flex h-[37px] items-center pt-[3px]">{a.el}</span>
            <i className={"block h-[2px] " + (a.on ? "w-full " : "w-[40px] ") + (a.line ? "bg-[#8aa5cf]" : "")} />
          </div>
        ))}
      </div>
      <div className="ml-auto flex w-[374px] shrink-0 items-center pl-px text-[14.5px] tracking-[-0.4px]">
        <Svg s={22} box="0 0 22 22" className="mr-[9px]"><path d="M5 14A4 4 0 0 1 5 7A6 6 0 0 1 16 6A4.500 4.500 0 0 1 17 15Z" fill="#cfe6fb" /><path d="M7 15L6 18M11 15L10 18M15 15L14 18" stroke="#3ba0f0" strokeWidth="1.600" /></Svg>
        <span className="w-[38px] tracking-[-0.6px]">23°C</span>
        <span className="w-[61px] tracking-[-0.5px]">AQI 84</span>
        <svg width="12" height="8" viewBox="0 0 12 8" fill="none" className="mr-[12px]"><path d="M1 7L6 1.500L11 7" stroke="#fff" strokeWidth="1.300" /></svg>
        <Svg s={16} className="mr-[6px]"><path d="M1.500 15A13 13 0 0 1 14.500 2M5 15A10 10 0 0 1 14.500 5.500M8.500 15A6.500 6.500 0 0 1 14.500 9" stroke="#ddd" strokeWidth="1.200" /><circle cx="13" cy="13.500" r="1.500" fill="#fff" /></Svg>
        <Svg s={17} className="mr-[8px]"><path d="M1 6H3.500L7 3V13L3.500 10H1Z" stroke="#fff" /><path d="M9 6Q10.500 8 9 10M11 4.500Q13.500 8 11 11.500M13 3Q16.500 8 13 13" stroke="#fff" /></Svg>
        <Svg s={17} className="mr-[10px]"><path d="M4 13A3.800 3.800 0 0 1 3.800 5.600A5 5 0 0 1 13 6.200A3.500 3.500 0 0 1 12.500 13Z" fill="#fff" /><path d="M8 12V7M5.800 9L8 6.800L10.200 9" stroke="#222" strokeWidth="1.400" /></Svg>
        <Svg s={17}><path d="M4 11L11 2.500Q13 1 13.500 3.500L7 11.500L3.500 13ZM1 12Q2 9 4 10M7 13Q10 15 12 11L15.500 10" stroke="#fff" strokeWidth="1.100" /></Svg>
        <div className="ml-[8px] w-[72px] text-center text-[12px] leading-[18px] tracking-[-0.35px]">00:50<br />04-08-2021</div>
        <Svg s={18} box="0 0 18 18" className="ml-[11px]"><path d="M1 1H16V12H9L5 16V12H1Z" fill="#fff" /><path d="M3.500 4H13.500M3.500 6.500H13.500M3.500 9H10" stroke="#222" /><path d="M13 17A3.500 3.500 0 0 0 16 10.500A4 4 0 0 1 11.500 15Z" fill="#fff" stroke="#222" strokeWidth=".6" /></Svg>
      </div>
    </div>
  );
}

export default function App() {
  return (
    <div className={"flex h-[1080px] w-[1920px] flex-col overflow-hidden bg-[#e3efff] " + UI}>
      <div className="flex h-[21px] shrink-0 items-center justify-between border-b border-[#7fa6d8] bg-[linear-gradient(180deg,#cfe2f8_0px,#e6f1fe_3px,#e1eefd_10px,#d0e2f6_19px)] pr-[5px] pl-[2px]">
        <NLogo s={16} />
        <div className="flex items-center gap-[9px] text-[#44618c]">
          <Svg s={10} box="0 0 10 10"><path d="M1 7.500H8" stroke="currentColor" strokeWidth="2" /></Svg>
          <Svg s={10} box="0 0 10 10"><path d="M3 3V1H9V6H7M1 3.500H7V9H1Z" stroke="currentColor" strokeWidth="1.200" /></Svg>
          <Svg s={10} box="0 0 10 10"><path d="M1.500 1.500L8.500 8.500M8.500 1.500L1.500 8.500" stroke="currentColor" strokeWidth="1.700" /></Svg>
        </div>
      </div>
      <div className="h-[54px] shrink-0 bg-[#557db5]">
        <MenuBar />
        <MainToolbar />
      </div>
      <div className="flex h-[935px] shrink-0">
        <div className="ml-px flex w-[273px] shrink-0 flex-col">
          <SiteMap />
          <Dashboard />
        </div>
        <div className="ml-[2px] flex w-[1644px] shrink-0 flex-col">
          <div className="flex h-[637px] bg-[#e3efff]">
            <div className="flex min-w-0 grow flex-col border-r border-l border-[#8db3e3]">
              <ReportTabs />
              <div className="mr-[4px] flex h-[608px] flex-col border-r border-b border-[#8db3e3]">
                <ReportToolbar />
                <Report />
              </div>
              <div className="mt-[3px] h-px bg-[#8db3e3]" />
            </div>
            <SideTabs />
          </div>
          <Issues />
        </div>
      </div>
      <StatusBar />
      <Taskbar />
    </div>
  );
}
